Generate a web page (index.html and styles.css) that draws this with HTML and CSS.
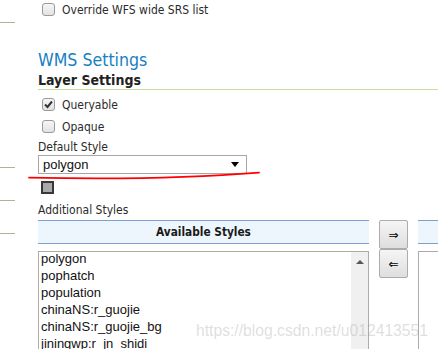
FILE: index.html
```html
<!DOCTYPE html>
<html lang="en">
<head>
    <meta charset="UTF-8">
    <meta name="viewport" content="width=device-width, initial-scale=1.0">
    <title>Layer - WMS Settings</title>
    <link rel="stylesheet" href="styles.css">
</head>
<body>
    <div class="page">
        <nav class="side">
            <div class="side-item s1"></div>
            <div class="side-item s2"></div>
            <div class="side-item s3"></div>
            <div class="side-item s4"></div>
        </nav>

        <main class="content">
            <label class="check-row first"><span class="cb"></span>Override WFS wide SRS list</label>

            <h2>WMS Settings</h2>
            <h3>Layer Settings</h3>

            <label class="check-row"><span class="cb checked">
                <svg width="11" height="11" viewBox="0 0 11 11"><path d="M2 5.5 L4.5 8 L9 2.5" fill="none" stroke="#333" stroke-width="2"/></svg>
            </span>Queryable</label>
            <label class="check-row second"><span class="cb"></span>Opaque</label>

            <div class="field-label">Default Style</div>
            <div class="select">
                <span>polygon</span>
                <span class="caret"></span>
            </div>
            <div class="swatch"></div>

            <div class="field-label additional">Additional Styles</div>
            <div class="dual-list">
                <div class="list-col">
                    <div class="list-head">Available Styles</div>
                    <div class="listbox">
                        <ul>
                            <li>polygon</li>
                            <li>pophatch</li>
                            <li>population</li>
                            <li>chinaNS:r_guojie</li>
                            <li>chinaNS:r_guojie_bg</li>
                            <li>jiningwp:r_jn_shidi</li>
                        </ul>
                        <div class="scrollbar"><span class="up"></span></div>
                    </div>
                </div>
                <div class="move-buttons">
                    <button>&rArr;</button>
                    <button>&lArr;</button>
                </div>
                <div class="list-col right">
                    <div class="list-head"></div>
                    <div class="listbox"></div>
                </div>
            </div>
        </main>
    </div>

    <svg class="scribble" width="438" height="349" viewBox="0 0 438 349">
        <path d="M29 177.6 C 100 179.2, 180 179, 259 172.6" fill="none" stroke="#f00" stroke-width="1.8" stroke-linecap="round"/>
    </svg>
    <div class="watermark">https://blog.csdn.net/u012413551</div>
</body>
</html>
```

FILE: styles.css
```css
body {
    margin: 0;
    padding: 0;
    background: #fff;
    font-family: "DejaVu Sans", Verdana, sans-serif;
    font-stretch: condensed;
    font-size: 12px;
    color: #2b2b2b;
    overflow: hidden;
}
.page {
    display: flex;
}
.side {
    width: 15px;
    flex-shrink: 0;
}
.side-item {
    border-bottom: 1px solid #a9b49b;
}
.s1 { height: 22px; }
.s2 { height: 144px; }
.s3 { height: 32px; }
.s4 { height: 32px; }
.content {
    flex: 1;
    margin-left: 23px;
}
.check-row {
    display: flex;
    align-items: center;
    height: 19px;
}
.check-row.second {
    margin-top: 3px;
}
.cb {
    width: 11px;
    height: 11px;
    margin-left: 4px;
    margin-right: 7px;
    border: 1px solid #9a9a9a;
    border-radius: 3px;
    background: linear-gradient(#f6f6f6, #e2e2e2);
    display: flex;
    align-items: center;
    justify-content: center;
}
h2 {
    margin: 30px 0 0;
    font-size: 17.6px;
    line-height: 22px;
    font-weight: normal;
    color: #1580c2;
}
h3 {
    margin: 1px 0 5px;
    font-size: 14px;
    line-height: 17px;
    font-weight: bold;
    color: #222;
    border-bottom: 1px solid #c6df9e;
}
.field-label {
    margin-top: 4px;
    line-height: 15px;
}
.select {
    box-sizing: border-box;
    width: 209px;
    height: 19px;
    border: 1px solid #a6a6a6;
    display: flex;
    align-items: center;
    justify-content: space-between;
    padding: 0 7px 0 4px;
    font-family: "Liberation Sans", Arial, sans-serif;
    font-stretch: normal;
    font-size: 13px;
    color: #111;
}
.caret {
    width: 0;
    height: 0;
    border-left: 4px solid transparent;
    border-right: 4px solid transparent;
    border-top: 5px solid #000;
}
.swatch {
    width: 9px;
    height: 9px;
    margin: 7px 0 0 3px;
    border: 2px solid #383838;
    background: #a9a9a9;
}
.field-label.additional {
    margin-top: 9px;
}
.dual-list {
    display: flex;
    margin-top: 2px;
}
.list-col {
    width: 331px;
    flex-shrink: 0;
}
.list-col.right {
    width: auto;
    flex: 1;
}
.list-head {
    height: 22px;
    line-height: 22px;
    border-top: 1px solid #7aa1cf;
    border-bottom: 1px solid #7aa1cf;
    background: #edf5fd;
    text-align: center;
    font-weight: bold;
    font-size: 11.75px;
    color: #1a1a1a;
}
.listbox {
    margin-top: 7px;
    height: 120px;
    border: 1px solid #ababab;
    display: flex;
    overflow: hidden;
}
.list-col.right .listbox {
    border-right: none;
}
.listbox ul {
    flex: 1;
    list-style: none;
    margin: -2px 0 0;
    padding: 0 0 0 2px;
    font-family: "Liberation Sans", Arial, sans-serif;
    font-stretch: normal;
    font-size: 13px;
    line-height: 17px;
    color: #111;
}
.scrollbar {
    width: 17px;
    background: #f0f0f0;
    display: flex;
    justify-content: center;
}
.up {
    margin-top: 8px;
    width: 0;
    height: 0;
    border-left: 4px solid transparent;
    border-right: 4px solid transparent;
    border-bottom: 4px solid #555;
}
.move-buttons {
    width: 29px;
    margin: 0 10px;
    display: flex;
    flex-direction: column;
}
.move-buttons button {
    width: 29px;
    height: 29px;
    padding: 0;
    border: 1px solid #acacac;
    border-radius: 2px;
    background: linear-gradient(#f5f5f5, #dedede);
    font-family: "DejaVu Sans", sans-serif;
    font-size: 12px;
    color: #000;
}
.scribble {
    position: absolute;
    left: 0;
    top: 0;
    pointer-events: none;
}
.watermark {
    position: absolute;
    left: 196px;
    top: 322px;
    font-family: "Liberation Sans", Arial, sans-serif;
    font-stretch: normal;
    font-size: 15.7px;
    line-height: 18px;
    color: rgba(160, 160, 160, 0.35);
    pointer-events: none;
}
```
